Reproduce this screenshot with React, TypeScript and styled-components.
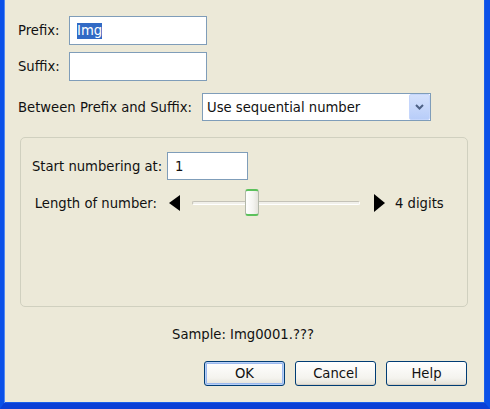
import React from "react";
import styled, { createGlobalStyle } from "styled-components";

const GlobalStyle = createGlobalStyle`
  html, body {
    margin: 0;
    padding: 0;
    background: #ece9d8;
  }
  body {
    font-family: "DejaVu Sans", Tahoma, sans-serif;
    font-size: 13.2px;
    color: #111;
  }
`;

const Frame = styled.div`
  box-sizing: border-box;
  width: 490px;
  height: 409px;
  background: #ece9d8;
  border-left: 4px solid #0a50e8;
  border-right: 5px solid #0a50e8;
  border-bottom: 6px solid #0a3fd6;
  box-shadow: inset 1px 0 0 #4f88f2, inset -1px 0 0 #1a5ee8, inset 0 -1px 0 #1a5ee8;
  padding: 16px 17px 0 14px;
  display: flex;
  flex-direction: column;
`;

const FieldRow = styled.div<{ $gap?: number }>`
  display: flex;
  align-items: center;
  margin-top: ${(p) => p.$gap ?? 0}px;
`;

const Label = styled.span<{ $width?: number }>`
  display: inline-block;
  width: ${(p) => (p.$width ? `${p.$width}px` : "auto")};
  white-space: nowrap;
`;

const TextInput = styled.div<{ $width: number; $height: number }>`
  box-sizing: border-box;
  width: ${(p) => p.$width}px;
  height: ${(p) => p.$height}px;
  border: 1px solid #7f9db9;
  background: #fff;
  padding: 0 7px;
  display: flex;
  align-items: center;
`;

const Selected = styled.span`
  background: #316ac5;
  color: #fff;
  line-height: 16px;
`;

const SelectBox = styled.div`
  box-sizing: border-box;
  width: 229px;
  height: 28px;
  border: 1px solid #7f9db9;
  background: #fff;
  display: flex;
  align-items: center;
`;

const SelectText = styled.span`
  flex: 1;
  padding-left: 4px;
`;

const DropButton = styled.div`
  box-sizing: border-box;
  width: 21px;
  height: 26px;
  border: 1px solid #c5d6fc;
  border-radius: 2px;
  background: linear-gradient(#d4e1fc, #b8cdf9);
  display: flex;
  align-items: center;
  justify-content: center;
`;

const GroupBox = styled.div`
  box-sizing: border-box;
  height: 170px;
  margin: 16px 0 0 2px;
  border: 1px solid #d0d0bf;
  border-radius: 5px;
  padding: 14px 0 0 11px;
  display: grid;
  grid-template-columns: 125px auto;
  grid-auto-rows: 28px;
  column-gap: 10px;
  row-gap: 9px;
  align-content: start;
  align-items: center;
  justify-content: start;
`;

const GridLabel = styled.span`
  text-align: right;
  white-space: nowrap;
`;

const Slider = styled.div`
  display: flex;
  align-items: center;
  height: 28px;
  padding-left: 1px;
`;

const Track = styled.div`
  position: relative;
  width: 168px;
  height: 28px;
  margin-left: 12px;
  display: flex;
  align-items: center;
`;

const Channel = styled.div`
  box-sizing: border-box;
  width: 100%;
  height: 4px;
  border: 1px solid #c4c2b8;
  border-bottom-color: #fff;
  border-right-color: #fff;
  border-radius: 2px;
  background: #f1f0ea;
`;

const Thumb = styled.div`
  position: absolute;
  top: 0;
  box-sizing: border-box;
  width: 14px;
  height: 27px;
  border: 1px solid #b3b8aa;
  border-top: 2px solid #5cc15c;
  border-bottom: 2px solid #5cc15c;
  border-radius: 3px;
  background: linear-gradient(90deg, #ffffff, #f4f4f0 60%, #e4e3dc);
`;

const DigitsText = styled.span`
  margin-left: 10px;
  white-space: nowrap;
`;

const Sample = styled.div`
  margin-top: 20px;
  line-height: 16px;
  text-align: center;
`;

const ButtonRow = styled.div`
  display: flex;
  justify-content: flex-end;
  gap: 10px;
  margin: 18px 1px 0 0;
`;

const Button = styled.button<{ $default?: boolean }>`
  box-sizing: border-box;
  width: 81px;
  height: 25px;
  padding: 0;
  font: inherit;
  color: #111;
  border: 1px solid #003c74;
  border-radius: 3px;
  background: linear-gradient(#ffffff, #f4f3ee 70%, #e3e0d6);
  box-shadow: ${(p) =>
    p.$default ? "inset 0 0 0 1px #b8d0f7, inset 0 0 0 2px #9ab8ee" : "inset 0 -1px 0 #d6d0c5"};
`;

const Chevron = () => (
  <svg width="9" height="6" viewBox="0 0 9 6">
    <polyline points="1,1 4.5,4.5 8,1" fill="none" stroke="#4d6185" strokeWidth="2" />
  </svg>
);

const ArrowLeft = () => (
  <svg width="12" height="16" viewBox="0 0 12 16">
    <polygon points="12,0 12,16 1,8" fill="#000" />
  </svg>
);

const ArrowRight = () => (
  <svg width="11" height="18" viewBox="0 0 11 18" style={{ marginLeft: 14 }}>
    <polygon points="0,0 11,9 0,18" fill="#000" />
  </svg>
);

export default function App() {
  const thumbLeft = 53;
  return (
    <>
      <GlobalStyle />
      <Frame>
        <FieldRow>
          <Label $width={51}>Prefix:</Label>
          <TextInput $width={138} $height={29}>
            <Selected>Img</Selected>
          </TextInput>
        </FieldRow>
        <FieldRow $gap={7}>
          <Label $width={51}>Suffix:</Label>
          <TextInput $width={138} $height={29} />
        </FieldRow>
        <FieldRow $gap={12}>
          <Label $width={184}>Between Prefix and Suffix:</Label>
          <SelectBox>
            <SelectText>Use sequential number</SelectText>
            <DropButton>
              <Chevron />
            </DropButton>
          </SelectBox>
        </FieldRow>

        <GroupBox>
          <GridLabel>Start numbering at:</GridLabel>
          <TextInput $width={81} $height={28}>1</TextInput>
          <GridLabel>Length of number:</GridLabel>
          <Slider>
            <ArrowLeft />
            <Track>
              <Channel />
              <Thumb style={{ left: thumbLeft }} />
            </Track>
            <ArrowRight />
            <DigitsText>4 digits</DigitsText>
          </Slider>
        </GroupBox>

        <Sample>Sample: Img0001.???</Sample>

        <ButtonRow>
          <Button $default>OK</Button>
          <Button>Cancel</Button>
          <Button>Help</Button>
        </ButtonRow>
      </Frame>
    </>
  );
}
